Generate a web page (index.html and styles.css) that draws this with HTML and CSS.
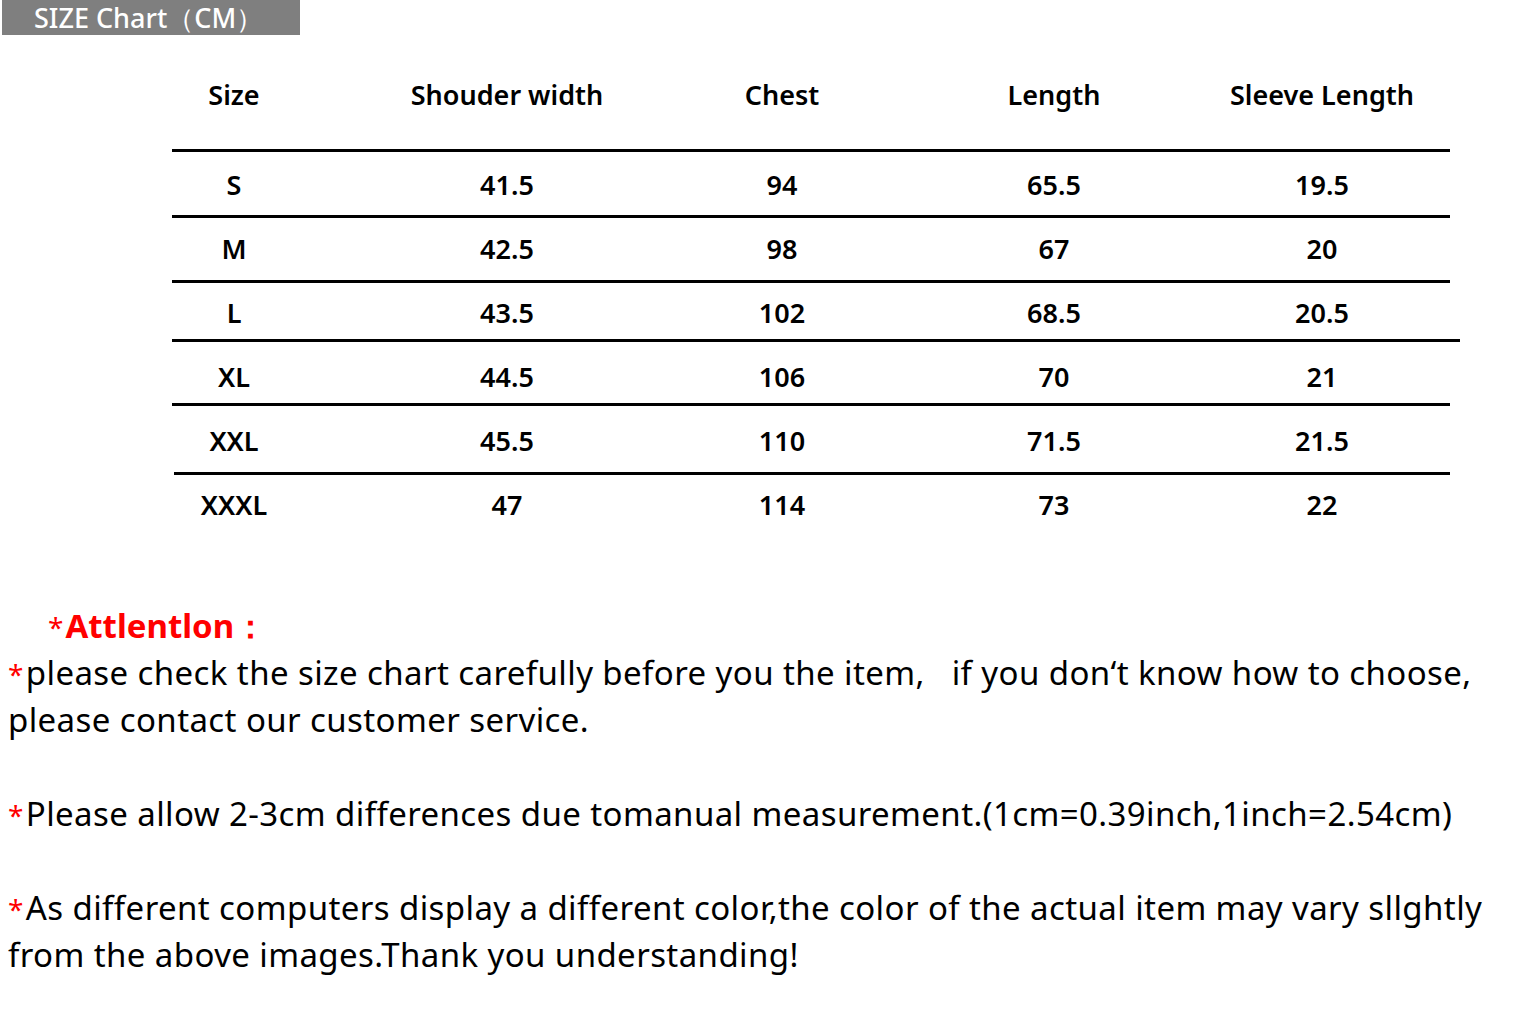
FILE: index.html
```html
<!DOCTYPE html>
<html>
<head>
<meta charset="utf-8">
<link rel="stylesheet" href="styles.css">
</head>
<body>
<div class="banner">SIZE Chart（CM）</div>
<div class="table">
  <div class="row head">
    <div class="cells"><span>Size</span><span>Shouder width</span><span>Chest</span><span>Length</span><span>Sleeve Length</span></div>
  </div>
  <div class="row r1"><div class="cells"><span>S</span><span>41.5</span><span>94</span><span>65.5</span><span>19.5</span></div></div>
  <div class="row r2"><div class="cells"><span>M</span><span>42.5</span><span>98</span><span>67</span><span>20</span></div></div>
  <div class="row r3"><div class="cells"><span>L</span><span>43.5</span><span>102</span><span>68.5</span><span>20.5</span></div></div>
  <div class="row r4"><div class="cells"><span>XL</span><span>44.5</span><span>106</span><span>70</span><span>21</span></div></div>
  <div class="row r5"><div class="cells"><span>XXL</span><span>45.5</span><span>110</span><span>71.5</span><span>21.5</span></div></div>
  <div class="row r6"><div class="cells"><span>XXXL</span><span>47</span><span>114</span><span>73</span><span>22</span></div></div>
</div>
<div class="notes">
  <p class="attn"><span class="star">*</span>Attlentlon：</p>
  <p><span class="star">*</span>please check the size chart carefully before you the item,&nbsp;&nbsp; if you don‘t know how to choose, please contact our customer service.</p>
  <p class="gap"><span class="star">*</span>Please allow 2-3cm differences due tomanual measurement.(1cm=0.39inch,1inch=2.54cm)</p>
  <p class="gap"><span class="star">*</span>As different computers display a different color,the color of the actual item may vary sllghtly from the above images.Thank you understanding!</p>
</div>
</body>
</html>
```

FILE: styles.css
```css
html, body {
  margin: 0;
  padding: 0;
  background: #fff;
}
body {
  width: 1513px;
  height: 1010px;
  overflow: hidden;
  font-family: "Noto Sans", "Liberation Sans", sans-serif;
  color: #000;
}
.banner {
  margin-left: 2px;
  width: 266px;
  height: 35px;
  padding-left: 32px;
  background: #7f7f7f;
  color: #fff;
  font-size: 27px;
  line-height: 36px;
  font-weight: 500;
  white-space: nowrap;
}
.table {
  margin-left: 172px;
  width: 1278px;
}
.row {
  border-bottom: 3px solid #000;
}
.row.head {
  height: 54px;
  padding-top: 60px;
}
.r1 { padding-top: 13px; height: 50px; }
.r2 { padding-top: 11px; height: 51px; }
.r3 { padding-top: 10px; height: 46px; width: 1288px; }
.r4 { padding-top: 15px; height: 46px; }
.r5 { padding-top: 15px; height: 51px; margin-left: 2px; }
.r6 { padding-top: 10px; height: 50px; border-bottom: none; }
.r5 .cells { margin-left: -76px; }
.cells {
  margin-left: -74px;
  display: grid;
  grid-template-columns: 272px 274px 276px 268px 268px;
  justify-items: center;
  font-size: 27px;
  font-weight: 600;
  line-height: 40px;
}
.head .cells {
  line-height: 0;
}
.notes {
  margin-top: 67px;
  padding-left: 8px;
  width: 1485px;
  font-size: 33px;
  line-height: 47px;
  letter-spacing: 0.4px;
}
.notes p {
  margin: 0;
}
.notes p.gap {
  margin-top: 47px;
}
.attn {
  padding-left: 40px;
  color: #f00;
  font-weight: bold;
  font-size: 33px;
  letter-spacing: 0;
}
.star {
  color: #f00;
  font-size: 28px;
  font-weight: normal;
  line-height: 1;
  margin-right: 2px;
}
```
